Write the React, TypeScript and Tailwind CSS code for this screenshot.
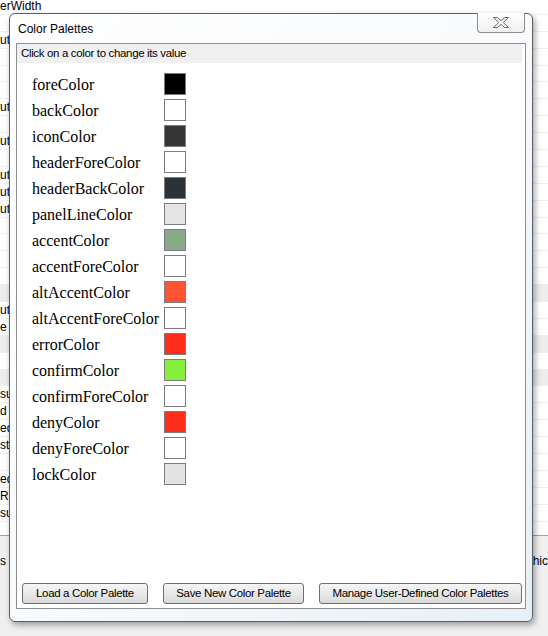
import React from "react";

type Swatch = { name: string; color: string };

const SWATCHES: Swatch[] = [
  { name: "foreColor", color: "#000000" },
  { name: "backColor", color: "#ffffff" },
  { name: "iconColor", color: "#353535" },
  { name: "headerForeColor", color: "#ffffff" },
  { name: "headerBackColor", color: "#2b3338" },
  { name: "panelLineColor", color: "#e5e5e5" },
  { name: "accentColor", color: "#8ba889" },
  { name: "accentForeColor", color: "#ffffff" },
  { name: "altAccentColor", color: "#fe5431" },
  { name: "altAccentForeColor", color: "#ffffff" },
  { name: "errorColor", color: "#fe2e1d" },
  { name: "confirmColor", color: "#84f03b" },
  { name: "confirmForeColor", color: "#ffffff" },
  { name: "denyColor", color: "#fe2e1d" },
  { name: "denyForeColor", color: "#ffffff" },
  { name: "lockColor", color: "#e3e3e3" },
];

// rows of the property sheet sitting behind the dialog
const SHEET_ROWS: { text?: string; shade?: boolean }[] = Array.from({ length: 31 }, () => ({}));
const LEFT_TEXT: Record<number, string> = {
  0: "erWidth",
  2: "ut",
  6: "ut",
  8: "ut",
  10: "ut",
  11: "ut",
  12: "ut",
  18: "ut",
  19: "e",
  23: "su",
  24: "d",
  25: "ed",
  26: "st",
  28: "ed",
  29: "Re",
  30: "su",
};
SHEET_ROWS.forEach((r, i) => {
  r.text = LEFT_TEXT[i];
  r.shade = i === 17 || i === 20 || i === 22;
});

function Sheet() {
  return (
    <div className="flex h-full flex-col text-[12px] text-black">
      <div className="mt-[-2px] flex flex-col">
        {SHEET_ROWS.map((row, i) => (
          <div
            key={i}
            className={
              "flex h-[16.9px] items-center border-b border-[#f0f0f0] " +
              (row.shade ? "bg-[#ededed]" : "bg-white")
            }
          >
            <span className="leading-none">{row.text}</span>
          </div>
        ))}
      </div>
      <div className="flex-1 bg-white" />
      <div className="flex h-[101px] flex-col border-t border-[#a3a3a3] bg-[#f0f0f0]">
        <div className="mt-[19px] flex items-center justify-between">
          <span className="leading-none">s a</span>
          <span className="leading-none">hic</span>
        </div>
      </div>
    </div>
  );
}

function CloseGlyph() {
  return (
    <svg width="18" height="13" viewBox="0 0 18 13">
      <path
        d="M1.5 1.5 H5.5 L9 4.6 L12.5 1.5 H16.5 L11.3 6.5 L16.5 11.5 H12.5 L9 8.4 L5.5 11.5 H1.5 L6.7 6.5 Z"
        fill="#f4f4f4"
        stroke="#6a6a6a"
        strokeWidth="1"
        strokeLinejoin="round"
      />
    </svg>
  );
}

function PaletteButton({ label, width }: { label: string; width: string }) {
  return (
    <button
      className={
        width +
        " h-[21px] rounded-[3px] border border-[#707070] bg-gradient-to-b from-[#f6f6f6] via-[#e9e9e9] to-[#d9d9d9] text-[11.5px] leading-none tracking-[-0.35px] text-black"
      }
    >
      {label}
    </button>
  );
}

export default function App() {
  return (
    <div
      className="relative h-[636px] w-[548px] overflow-hidden bg-white"
      style={{ fontFamily: '"Liberation Sans", Arial, sans-serif' }}
    >
      <Sheet />

      {/* dialog window */}
      <div className="absolute left-[9px] top-[13px] flex h-[609px] w-[524px] flex-col rounded-[6px] border border-[#5b5f63] bg-gradient-to-br from-[#ffffff] via-[#f8fafc] to-[#e6f0f6] px-[6px] pb-[12px] shadow-[2px_3px_6px_rgba(0,0,0,0.35)]">
        <div className="relative flex h-[29px] shrink-0 items-center">
          <span className="pl-[2px] text-[12px] text-black">Color Palettes</span>
          <div className="absolute right-[1px] top-[-1px] flex h-[20px] w-[48px] items-center justify-center rounded-b-[4px] border border-t-0 border-[#8d8d8d] bg-gradient-to-b from-[#ffffff] to-[#eef0f2]">
            <CloseGlyph />
          </div>
        </div>

        <div className="flex flex-1 flex-col border border-[#8c8f92] bg-white">
          <div className="mr-[3px] flex h-[19px] items-center bg-[#f0f0f0] pl-[4px] text-[11.5px] tracking-[-0.35px] text-black">
            Click on a color to change its value
          </div>

          <div
            className="flex flex-col gap-[4px] pl-[15px] pt-[10px]"
            style={{ fontFamily: '"Liberation Serif", "Times New Roman", serif' }}
          >
            {SWATCHES.map((s) => (
              <div key={s.name} className="flex h-[22px] items-center">
                <span className="w-[132px] pt-[2px] text-[16px] leading-none text-black">{s.name}</span>
                <div
                  className="h-[22px] w-[22px] border border-[#7c7c7c]"
                  style={{ backgroundColor: s.color }}
                />
              </div>
            ))}
          </div>

          <div className="flex-1" />

          <div className="flex items-center justify-between pb-[4px] pl-[5px] pr-[3px]">
            <PaletteButton label="Load a Color Palette" width="w-[126px]" />
            <PaletteButton label="Save New Color Palette" width="w-[141px]" />
            <PaletteButton label="Manage User-Defined Color Palettes" width="w-[203px]" />
          </div>
        </div>
      </div>
    </div>
  );
}
